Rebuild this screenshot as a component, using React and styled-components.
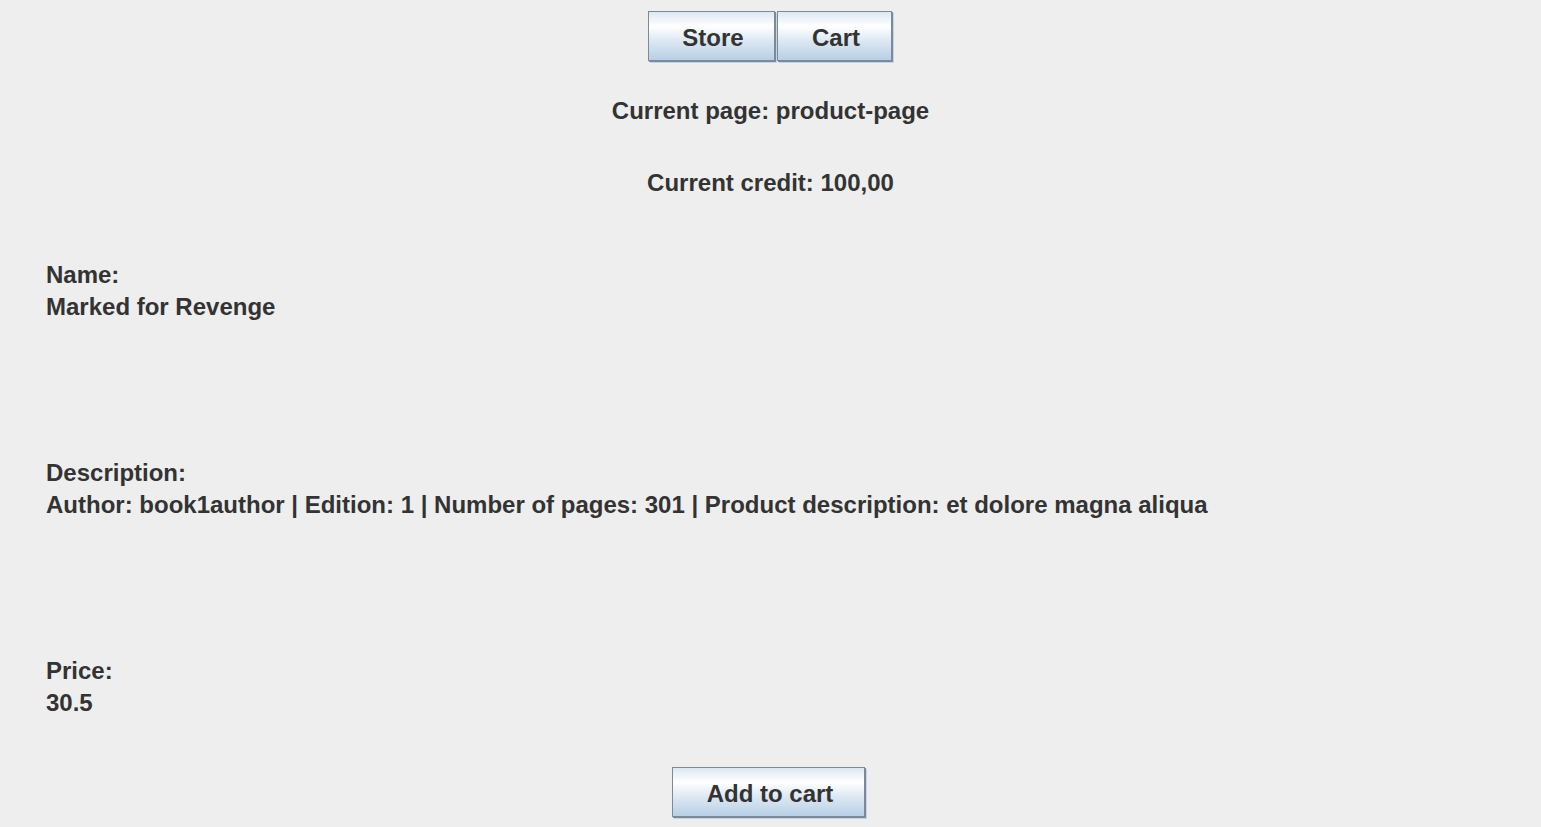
import React from "react";
import styled, { createGlobalStyle } from "styled-components";

const Global = createGlobalStyle`
  html, body { margin: 0; padding: 0; background: #eeeeee; }
  body {
    font-family: "Liberation Sans", Arial, sans-serif;
    font-weight: bold;
    color: #333333;
    overflow: hidden;
  }
`;

const Page = styled.div`
  width: 1541px;
  height: 827px;
  background: #eeeeee;
  display: flex;
  flex-direction: column;
  box-sizing: border-box;
  padding-top: 11px;
`;

const Nav = styled.div`
  display: flex;
  justify-content: center;
  padding-left: 1px;
`;

const MetalButton = styled.button`
  box-sizing: border-box;
  width: ${(p) => p.$w}px;
  height: 50px;
  margin: 0 2px 2px 0;
  border: 1px solid #7a8a99;
  box-shadow: 1px 1px 0 #7a8a99, 2px 2px 0 #c4d5e7;
  background: linear-gradient(
    to bottom,
    #dde8f3 0%,
    #ffffff 30%,
    #dde8f3 60%,
    #b8cfe5 100%
  );
  font-family: "Liberation Sans", Arial, sans-serif;
  font-weight: bold;
  font-size: 24px;
  color: #333333;
  padding: 4px 0 0 3px;
  cursor: pointer;
  display: flex;
  align-items: center;
  justify-content: center;
`;

const StatusLine = styled.div`
  height: 32px;
  line-height: 32px;
  font-size: 24px;
  text-align: center;
  margin-top: ${(p) => p.$top}px;
`;

const Field = styled.div`
  display: flex;
  flex-direction: column;
  padding-left: 46px;
  margin-top: ${(p) => p.$top}px;
`;

const FieldLine = styled.div`
  height: 32px;
  line-height: 32px;
  font-size: 24px;
  white-space: nowrap;
`;

const Footer = styled.div`
  display: flex;
  justify-content: center;
  padding-right: 2px;
  margin-top: 48px;
`;

export default function App() {
  return (
    <>
      <Global />
      <Page>
        <Nav>
          <MetalButton $w={127}>Store</MetalButton>
          <MetalButton $w={115}>Cart</MetalButton>
        </Nav>
        <StatusLine $top={32}>Current page: product-page</StatusLine>
        <StatusLine $top={40}>Current credit: 100,00</StatusLine>
        <Field $top={60}>
          <FieldLine>Name:</FieldLine>
          <FieldLine>Marked for Revenge</FieldLine>
        </Field>
        <Field $top={134}>
          <FieldLine>Description:</FieldLine>
          <FieldLine>
            Author: book1author | Edition: 1 | Number of pages: 301 | Product
            description: et dolore magna aliqua
          </FieldLine>
        </Field>
        <Field $top={134}>
          <FieldLine>Price:</FieldLine>
          <FieldLine>30.5</FieldLine>
        </Field>
        <Footer>
          <MetalButton $w={193}>Add to cart</MetalButton>
        </Footer>
      </Page>
    </>
  );
}
